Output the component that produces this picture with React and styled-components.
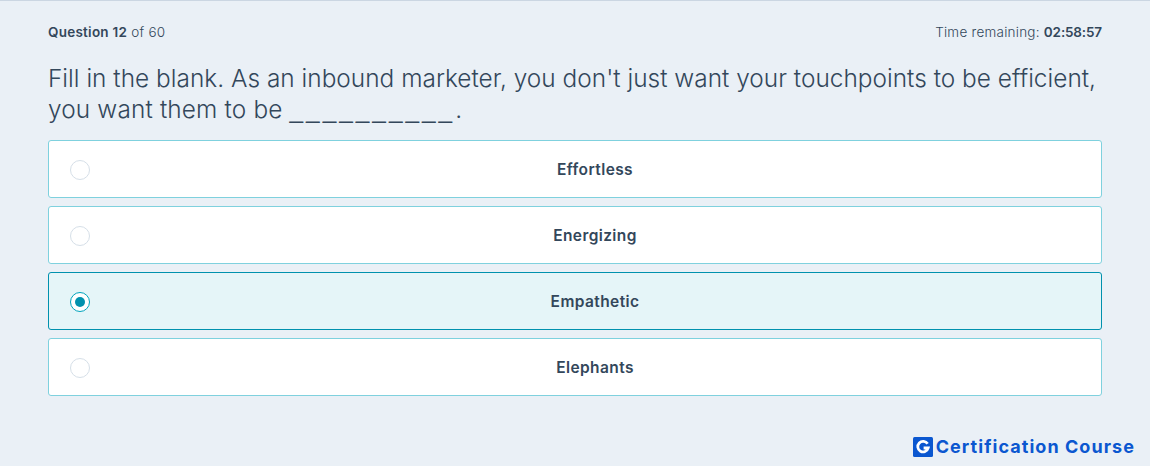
import React from "react";
import styled, { createGlobalStyle } from "styled-components";

const Global = createGlobalStyle`
  html, body { margin: 0; padding: 0; background: #eaf0f6; }
  body { font-family: "Inter", "Lato", sans-serif; color: #33475b; }
`;

const Page = styled.main`
  box-sizing: border-box;
  width: 1150px;
  height: 466px;
  border-top: 1px solid #cbd6e2;
  background: #eaf0f6;
  padding: 22px 48px 0;
  display: flex;
  flex-direction: column;
  overflow: hidden;
`;

const Header = styled.header`
  display: flex;
  justify-content: space-between;
  align-items: center;
  height: 18px;
  font-size: 13.5px;
  line-height: 18px;
  font-weight: 300;
  letter-spacing: 0.25px;
`;

const Strong = styled.strong`
  font-weight: 600;
`;

const Timer = styled(Strong)`
  letter-spacing: -0.15px;
`;

const Question = styled.h1`
  margin: 22px 0 15px;
  font-size: 24.4px;
  line-height: 31px;
  font-weight: 300;
  color: #33475b;
`;

const Line = styled.span`
  display: block;
  letter-spacing: ${(p) => p.$spacing || "0.02px"};
`;

const Blank = styled.span`
  font-family: "Liberation Sans", sans-serif;
  letter-spacing: 3px;
`;

const Options = styled.div`
  display: flex;
  flex-direction: column;
  gap: 8px;
`;

const Option = styled.label`
  box-sizing: border-box;
  height: 58px;
  padding-left: 40px;
  display: flex;
  align-items: center;
  position: relative;
  justify-content: center;
  border-radius: 3px;
  border: 1px solid ${(p) => (p.$selected ? "#0091ae" : "#7fd1de")};
  background: ${(p) => (p.$selected ? "#e5f5f8" : "#ffffff")};
  font-size: 15.5px;
  font-weight: 600;
  letter-spacing: 0.4px;
  color: #33475b;
`;

const Radio = styled.span`
  box-sizing: border-box;
  position: absolute;
  left: 21px;
  top: 19px;
  width: 20px;
  height: 20px;
  border-radius: 50%;
  background: #fff;
  border: ${(p) => (p.$selected ? "1.5px solid #00a4bd" : "1.5px solid #d6dfe8")};
  display: flex;
  align-items: center;
  justify-content: center;
`;

const Dot = styled.span`
  width: 10px;
  height: 10px;
  border-radius: 50%;
  background: #0091ae;
`;

const Footer = styled.footer`
  margin-top: auto;
  margin-right: -33px;
  margin-bottom: 8px;
  display: flex;
  justify-content: flex-end;
  align-items: center;
  gap: 3px;
`;

const Brand = styled.span`
  font-size: 18px;
  line-height: 22px;
  font-weight: 700;
  letter-spacing: 1.05px;
  color: #0b57d0;
`;

const Logo = () => (
  <svg width="20" height="20" viewBox="0 0 20 20" aria-hidden="true">
    <rect width="20" height="20" rx="1.5" fill="#0b57d0" />
    <path d="M14.6 6.8A5.3 5.3 0 1 0 15.2 11H10.6" fill="none" stroke="#fff" strokeWidth="2.8" />
  </svg>
);

const items = ["Effortless", "Energizing", "Empathetic", "Elephants"];
const SELECTED = "Empathetic";

export default function App() {
  return (
    <Page>
      <Global />
      <Header>
        <span><Strong>Question 12</Strong> of 60</span>
        <span>Time remaining: <Timer>02:58:57</Timer></span>
      </Header>
      <Question>
        <Line>Fill in the blank. As an inbound marketer, you don't just want your touchpoints to be efficient,</Line>
        <Line $spacing="0.15px">you want them to be <Blank>__________</Blank>.</Line>
      </Question>
      <Options>
        {items.map((t) => {
          const selected = t === SELECTED;
          return (
            <Option key={t} $selected={selected}>
              <Radio $selected={selected}>{selected && <Dot />}</Radio>
              {t}
            </Option>
          );
        })}
      </Options>
      <Footer>
        <Logo />
        <Brand>Certification Course</Brand>
      </Footer>
    </Page>
  );
}
